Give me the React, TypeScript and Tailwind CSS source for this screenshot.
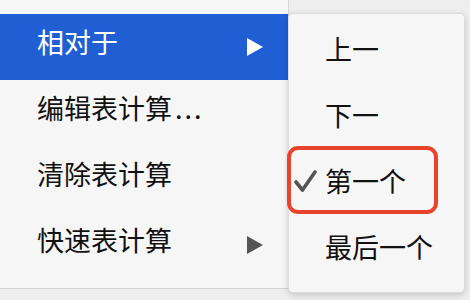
import React from "react";

const font = {
  fontFamily: '"Noto Sans CJK SC", "Noto Sans", sans-serif',
};

type MainItem = { label: string; dots?: boolean; submenu?: boolean; active?: boolean };

const mainItems: MainItem[] = [
  { label: "相对于", submenu: true, active: true },
  { label: "编辑表计算", dots: true },
  { label: "清除表计算" },
  { label: "快速表计算", submenu: true },
];

const subItems = [
  { label: "上一" },
  { label: "下一" },
  { label: "第一个", checked: true },
  { label: "最后一个" },
];

function Arrow({ className }: { className: string }) {
  return (
    <svg width="18" height="20" viewBox="0 0 18 20" className={className}>
      <path d="M1 1 L17 10 L1 19 Z" fill="currentColor" />
    </svg>
  );
}

export default function App() {
  return (
    <div
      className="relative flex h-[300px] w-[470px] overflow-hidden bg-[#eeeeee]"
      style={font}
    >
      <div className="h-[289px] w-[289px] shrink-0 border-r border-b border-[#d4d4d4] bg-[#f6f6f6] pt-[14px]">
        {mainItems.map((item) => (
          <div
            key={item.label}
            className={
              item.active
                ? "flex h-[66px] items-center justify-between bg-[#1f5fd3] pl-[37px] pr-[24px] text-white"
                : "flex h-[66px] items-center justify-between pl-[37px] pr-[24px] text-[#111111]"
            }
          >
            <span className="pb-[11px] text-[27px] leading-none">
              {item.label}
              {item.dots ? (
                <span className="ml-[3px] tracking-[2px]">...</span>
              ) : null}
            </span>
            {item.submenu ? (
              <Arrow
                className={item.active ? "text-white" : "text-[#555555]"}
              />
            ) : null}
          </div>
        ))}
      </div>

      <div className="mt-[13px] ml-[-1px] h-[280px] w-[177px] shrink-0 rounded-[5px] border border-[#dcdcdc] bg-[#f6f6f6] pt-[7px] shadow-[0_2px_6px_rgba(0,0,0,0.18)]">
        {subItems.map((item) => (
          <div
            key={item.label}
            className="flex h-[66px] items-center text-[#111111]"
          >
            <span className="flex w-[36px] justify-end pr-[8px] pb-[10px]">
              {item.checked ? (
                <svg width="23" height="24" viewBox="0 0 23 24">
                  <path
                    d="M2 13 L8.5 21 L21 3"
                    fill="none"
                    stroke="#555555"
                    strokeWidth="3.6"
                    strokeLinecap="round"
                    strokeLinejoin="round"
                  />
                </svg>
              ) : null}
            </span>
            <span className="pb-[11px] text-[27px] leading-none">{item.label}</span>
          </div>
        ))}
      </div>

      <div className="pointer-events-none absolute top-[146px] left-[287px] h-[68px] w-[151px] rounded-[11px] border-[4px] border-[#e8432c]" />
    </div>
  );
}
